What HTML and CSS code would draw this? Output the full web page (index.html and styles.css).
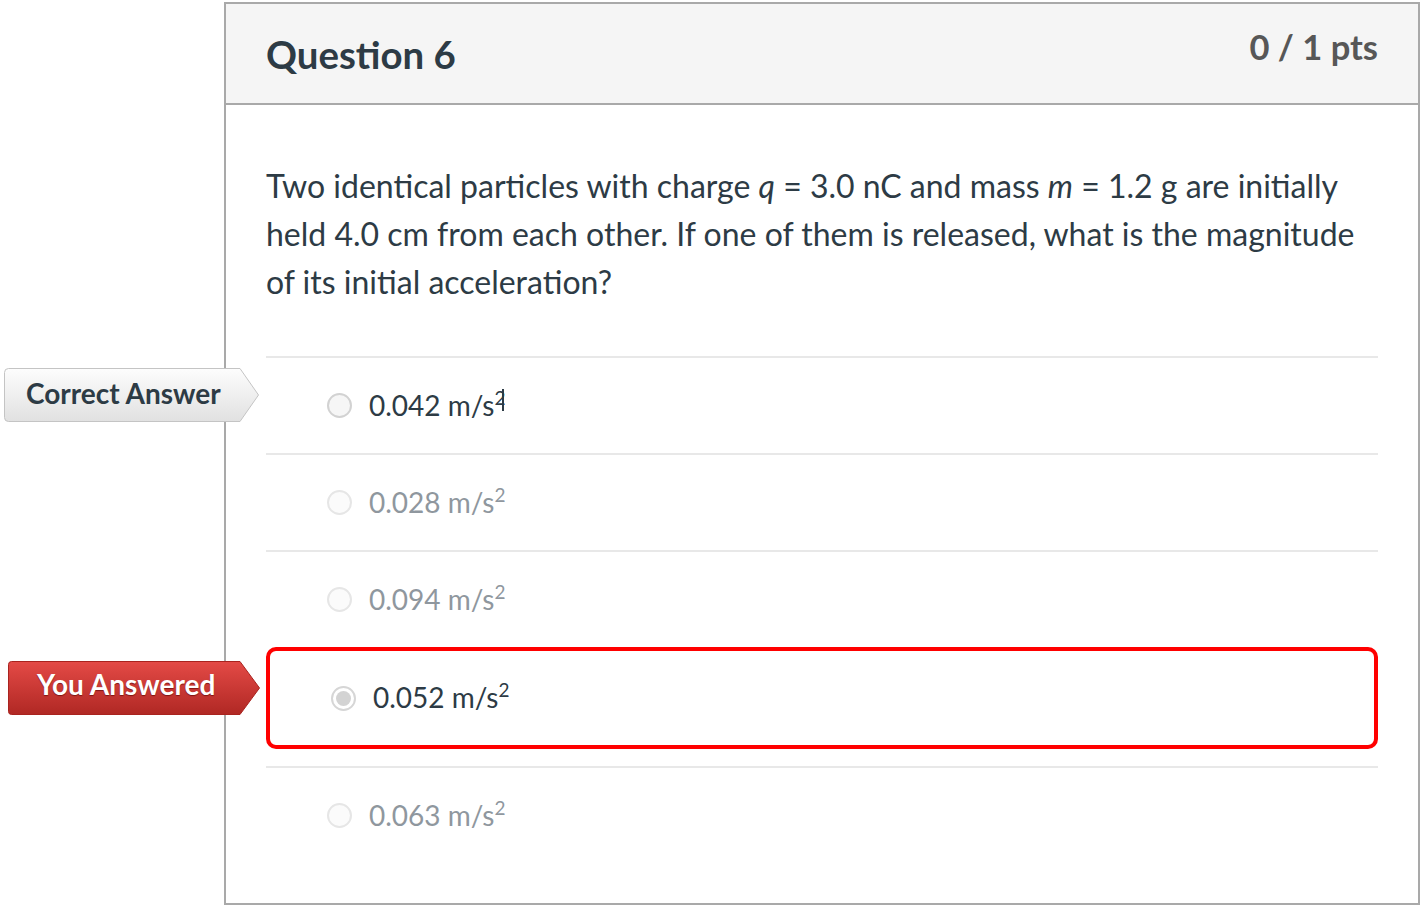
FILE: index.html
```html
<!DOCTYPE html>
<html lang="en">
<head>
<meta charset="utf-8">
<title>Question 6</title>
<link rel="stylesheet" href="styles.css">
</head>
<body>
<div class="page">
  <section class="question">
    <header class="q-header">
      <h2 class="q-title">Question 6</h2>
      <div class="q-points">0 / 1 pts</div>
    </header>
    <div class="q-body">
      <p class="q-text">Two identical particles with charge <i class="var">q</i> = 3.0 nC and mass <i class="var">m</i> = 1.2 g are initially held 4.0 cm from each other. If one of them is released, what is the magnitude of its initial acceleration?</p>
      <div class="answers">
        <div class="answer is-correct">
          <span class="tag tag-correct">
            <svg class="tag-shape" viewBox="0 0 255 54" aria-hidden="true">
              <defs>
                <linearGradient id="gradGray" x1="0" y1="0" x2="0" y2="1">
                  <stop offset="0" stop-color="#fdfdfd"/>
                  <stop offset="1" stop-color="#e1e1e1"/>
                </linearGradient>
              </defs>
              <path d="M4.5 0.5 H236 L254.5 27 L236 53.5 H4.5 Q0.5 53.5 0.5 49.5 V4.5 Q0.5 0.5 4.5 0.5 Z" fill="url(#gradGray)" stroke="#c4c4c4" stroke-width="1"/>
            </svg>
            <span class="tag-text">Correct Answer</span>
          </span>
          <span class="radio"></span>
          <span class="answer-text">0.042 m/s<sup class="caret">2</sup></span>
        </div>
        <div class="answer is-muted">
          <span class="radio"></span>
          <span class="answer-text">0.028 m/s<sup>2</sup></span>
        </div>
        <div class="answer is-muted">
          <span class="radio"></span>
          <span class="answer-text">0.094 m/s<sup>2</sup></span>
        </div>
        <div class="answer is-selected">
          <span class="tag tag-you">
            <svg class="tag-shape" viewBox="0 0 252 54" aria-hidden="true">
              <defs>
                <linearGradient id="gradRed" x1="0" y1="0" x2="0" y2="1">
                  <stop offset="0" stop-color="#e44a46"/>
                  <stop offset="1" stop-color="#b02824"/>
                </linearGradient>
              </defs>
              <path d="M3.5 0.5 H232 L251.5 27 L232 53.5 H3.5 Q0.5 53.5 0.5 50.5 V3.5 Q0.5 0.5 3.5 0.5 Z" fill="url(#gradRed)" stroke="#a9231f" stroke-width="1"/>
            </svg>
            <span class="tag-text">You Answered</span>
          </span>
          <span class="radio radio-checked"></span>
          <span class="answer-text">0.052 m/s<sup>2</sup></span>
        </div>
        <div class="answer is-muted">
          <span class="radio"></span>
          <span class="answer-text">0.063 m/s<sup>2</sup></span>
        </div>
      </div>
    </div>
  </section>
</div>
</body>
</html>
```

FILE: styles.css
```css
html, body {
  margin: 0;
  padding: 0;
  background: #ffffff;
}

body {
  font-family: Lato, "Liberation Sans", sans-serif;
  color: #2d3b45;
}

.page {
  padding: 2px 0 0 224px;
}

.question {
  width: 1196px;
  box-sizing: border-box;
  border: 2px solid #a9a9a9;
  background: #ffffff;
}

.q-header {
  height: 99px;
  background: #f5f5f5;
  border-bottom: 2px solid #a9a9a9;
  display: flex;
  justify-content: space-between;
  align-items: flex-start;
  padding: 0 40px 0 40px;
}

.q-title {
  margin: 31px 0 0 0;
  font-size: 38.4px;
  line-height: 39px;
  font-weight: 700;
  color: #2d3b45;
}

.q-points {
  margin-top: 25px;
  font-size: 34.5px;
  line-height: 35px;
  font-weight: 700;
  color: #575757;
}

.q-body {
  padding: 57px 40px 40px 40px;
}

.q-text {
  margin: 0 0 50px 0;
  font-size: 32px;
  line-height: 48px;
  color: #2d3b45;
}

.var {
  font-style: italic;
}

.answers {
  display: flex;
  flex-direction: column;
}

.answer {
  position: relative;
  height: 97px;
  box-sizing: border-box;
  border-top: 2px solid #e8e8e8;
  display: flex;
  align-items: center;
  padding-left: 61px;
}

.answer.is-selected {
  height: 102px;
  border: 4px solid #ff0000;
  border-radius: 10px;
  margin-bottom: 17px;
}

.radio {
  width: 25px;
  height: 25px;
  box-sizing: border-box;
  border-radius: 50%;
  border: 2px solid #d2d2d2;
  background: #f6f6f6;
  flex: none;
  position: relative;
}

.is-muted .radio {
  border-color: #e6e6e6;
  background: #fbfbfb;
}

.radio-checked {
  border-color: #d6d6d6;
  background: #ffffff;
}

.radio-checked::after {
  content: "";
  position: absolute;
  left: 3px;
  top: 3px;
  width: 15px;
  height: 15px;
  border-radius: 50%;
  background: #d3d3d3;
}

.answer-text {
  margin-left: 17px;
  font-size: 28px;
  line-height: 36px;
  color: #2d3b45;
  position: relative;
  top: -1px;
}

.is-muted .answer-text {
  color: #8f979e;
}

.answer-text sup {
  font-size: 19px;
  line-height: 0;
  vertical-align: 11px;
  position: relative;
}

.caret::after {
  content: "";
  position: absolute;
  left: 7px;
  top: 3px;
  width: 2px;
  height: 22px;
  background: #2d3b45;
}

.tag {
  position: absolute;
  height: 54px;
  display: flex;
  align-items: center;
  font-size: 28px;
  font-weight: 700;
}

.tag-shape {
  position: absolute;
  left: 0;
  top: 0;
  width: 100%;
  height: 100%;
}

.tag-text {
  position: relative;
  white-space: nowrap;
}

.tag-correct {
  width: 255px;
  top: 10px;
  right: calc(100% + 7px);
  color: #2d3b45;
}

.tag-correct .tag-text {
  padding-left: 22px;
  top: -2px;
}

.tag-you {
  width: 252px;
  top: 10px;
  right: calc(100% + 10px);
  color: #ffffff;
}

.tag-you .tag-text {
  padding-left: 29px;
  top: -4px;
  text-shadow: 0 1px 1px rgba(80, 0, 0, 0.6);
}
```
